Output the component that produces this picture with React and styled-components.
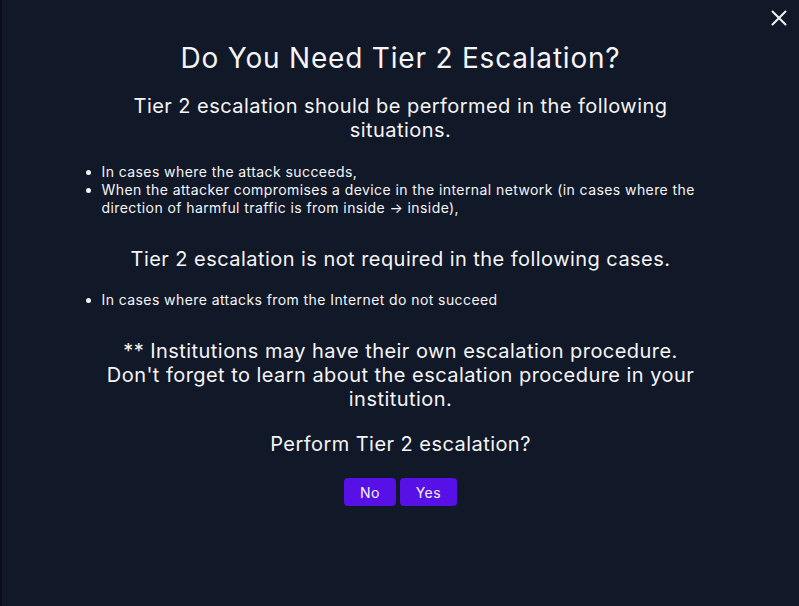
import React from "react";
import styled, { createGlobalStyle } from "styled-components";

const GlobalStyle = createGlobalStyle`
  html, body {
    margin: 0;
    padding: 0;
    background-color: #111827;
  }
  * {
    box-sizing: border-box;
  }
`;

const Modal = styled.div`
  position: relative;
  min-height: 606px;
  width: 100%;
  background-color: #111827;
  border-left: 2px solid #0b0f1c;
  color: #f5f5f7;
  font-family: Inter, "Noto Sans", sans-serif;
  display: flex;
  flex-direction: column;
  align-items: center;
  padding-top: 41px;
`;

const CloseButton = styled.button`
  position: absolute;
  top: 10px;
  right: 12px;
  width: 16px;
  height: 16px;
  padding: 0;
  border: none;
  background: none;
  cursor: pointer;
  display: flex;
`;

const Content = styled.div`
  width: 600px;
  display: flex;
  flex-direction: column;
  align-items: center;
  text-align: center;
`;

const Title = styled.h1`
  margin: 0;
  font-size: 28px;
  line-height: 34px;
  font-weight: 400;
  letter-spacing: 0.8px;
  white-space: nowrap;
`;

const Heading = styled.h2`
  margin: ${(p) => p.$top}px 0 0;
  font-size: 20px;
  line-height: 24px;
  font-weight: 400;
  letter-spacing: 0.45px;
`;

const List = styled.ul`
  align-self: stretch;
  margin: ${(p) => p.$top}px 0 0;
  padding-left: 1px;
  text-align: left;
  font-size: 14px;
  line-height: 18px;
  letter-spacing: 0.42px;
`;

const Actions = styled.div`
  display: flex;
  gap: 4px;
  margin-top: 22px;
`;

const Button = styled.button`
  height: 28px;
  padding: 0 ${(p) => p.$pad}px;
  border: none;
  border-radius: 4px;
  background-color: #5710e6;
  color: #f5f5f7;
  font-family: inherit;
  font-size: 14px;
  letter-spacing: 0.4px;
  cursor: pointer;
`;

export default function App() {
  return (
    <>
      <GlobalStyle />
      <Modal>
        <CloseButton aria-label="Close">
          <svg width="16" height="16" viewBox="0 0 16 16">
            <path d="M1.5 1.5 L14.5 14.5 M14.5 1.5 L1.5 14.5" stroke="#f3f4f6" strokeWidth="2" strokeLinecap="round" />
          </svg>
        </CloseButton>
        <Content>
          <Title>Do You Need Tier 2 Escalation?</Title>
          <Heading $top={19}>Tier 2 escalation should be performed in the following situations.</Heading>
          <List $top={21}>
            <li>In cases where the attack succeeds,</li>
            <li>
              When the attacker compromises a device in the internal network (in cases where the direction of harmful
              traffic is from inside → inside),
            </li>
          </List>
          <Heading $top={30}>Tier 2 escalation is not required in the following cases.</Heading>
          <List $top={20}>
            <li>In cases where attacks from the Internet do not succeed</li>
          </List>
          <Heading $top={30}>
            ** Institutions may have their own escalation procedure. Don't forget to learn about the escalation procedure
            in your institution.
          </Heading>
          <Heading $top={21}>Perform Tier 2 escalation?</Heading>
          <Actions>
            <Button $pad={16}>No</Button>
            <Button $pad={16}>Yes</Button>
          </Actions>
        </Content>
      </Modal>
    </>
  );
}
